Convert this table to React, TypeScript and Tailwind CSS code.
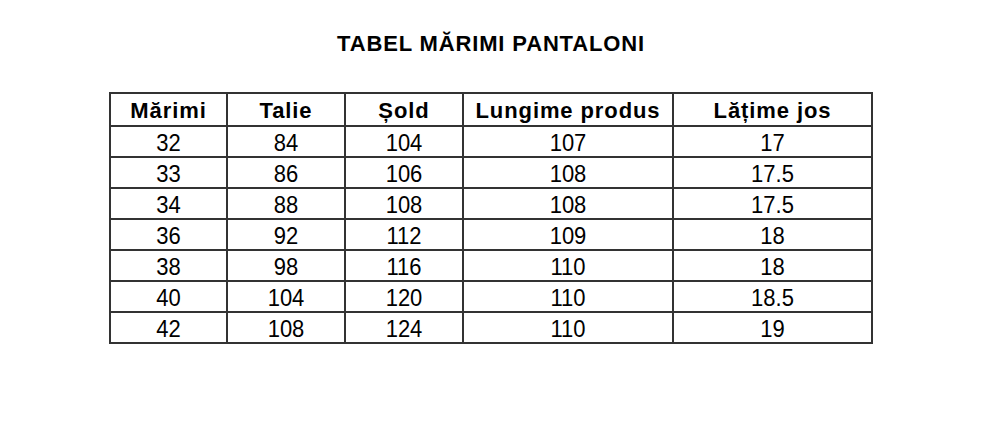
import React from "react";

const headers = ["Mărimi", "Talie", "Șold", "Lungime produs", "Lățime jos"];
const rows = [
  ["32", "84", "104", "107", "17"],
  ["33", "86", "106", "108", "17.5"],
  ["34", "88", "108", "108", "17.5"],
  ["36", "92", "112", "109", "18"],
  ["38", "98", "116", "110", "18"],
  ["40", "104", "120", "110", "18.5"],
  ["42", "108", "124", "110", "19"],
];
const widths = ["w-[117px]", "w-[118px]", "w-[118px]", "w-[210px]", "w-[199px]"];

export default function App() {
  return (
    <div
      className="w-[1000px] h-[429px] bg-white text-black"
      style={{ fontFamily: '"Liberation Sans", Arial, sans-serif' }}
    >
      <div className="ml-[109px] w-[764px] pt-[33px]">
        <h1 className="text-center text-[22px] leading-[22px] font-bold tracking-[0.85px]">
          TABEL MĂRIMI PANTALONI
        </h1>
        <div className="mt-[37px] border-l-2 border-t-2 border-[#333333]">
          <div className="flex h-[33px]">
            {headers.map((h, i) => (
              <div
                key={h}
                className={`${widths[i]} flex items-center justify-center border-r-2 border-b-2 border-[#333333] text-[22px] leading-[22px] font-bold tracking-[0.9px]`}
              >
                <span className="inline-block translate-y-px">{h}</span>
              </div>
            ))}
          </div>
          {rows.map((r, ri) => (
            <div key={ri} className="flex h-[31px]">
              {r.map((c, i) => (
                <div
                  key={i}
                  className={`${widths[i]} flex items-center justify-center border-r-2 border-b-2 border-[#333333] text-[22px] leading-[22px]`}
                >
                  <span className="inline-block scale-y-[1.08] translate-y-[1.5px]">{c}</span>
                </div>
              ))}
            </div>
          ))}
        </div>
      </div>
    </div>
  );
}
